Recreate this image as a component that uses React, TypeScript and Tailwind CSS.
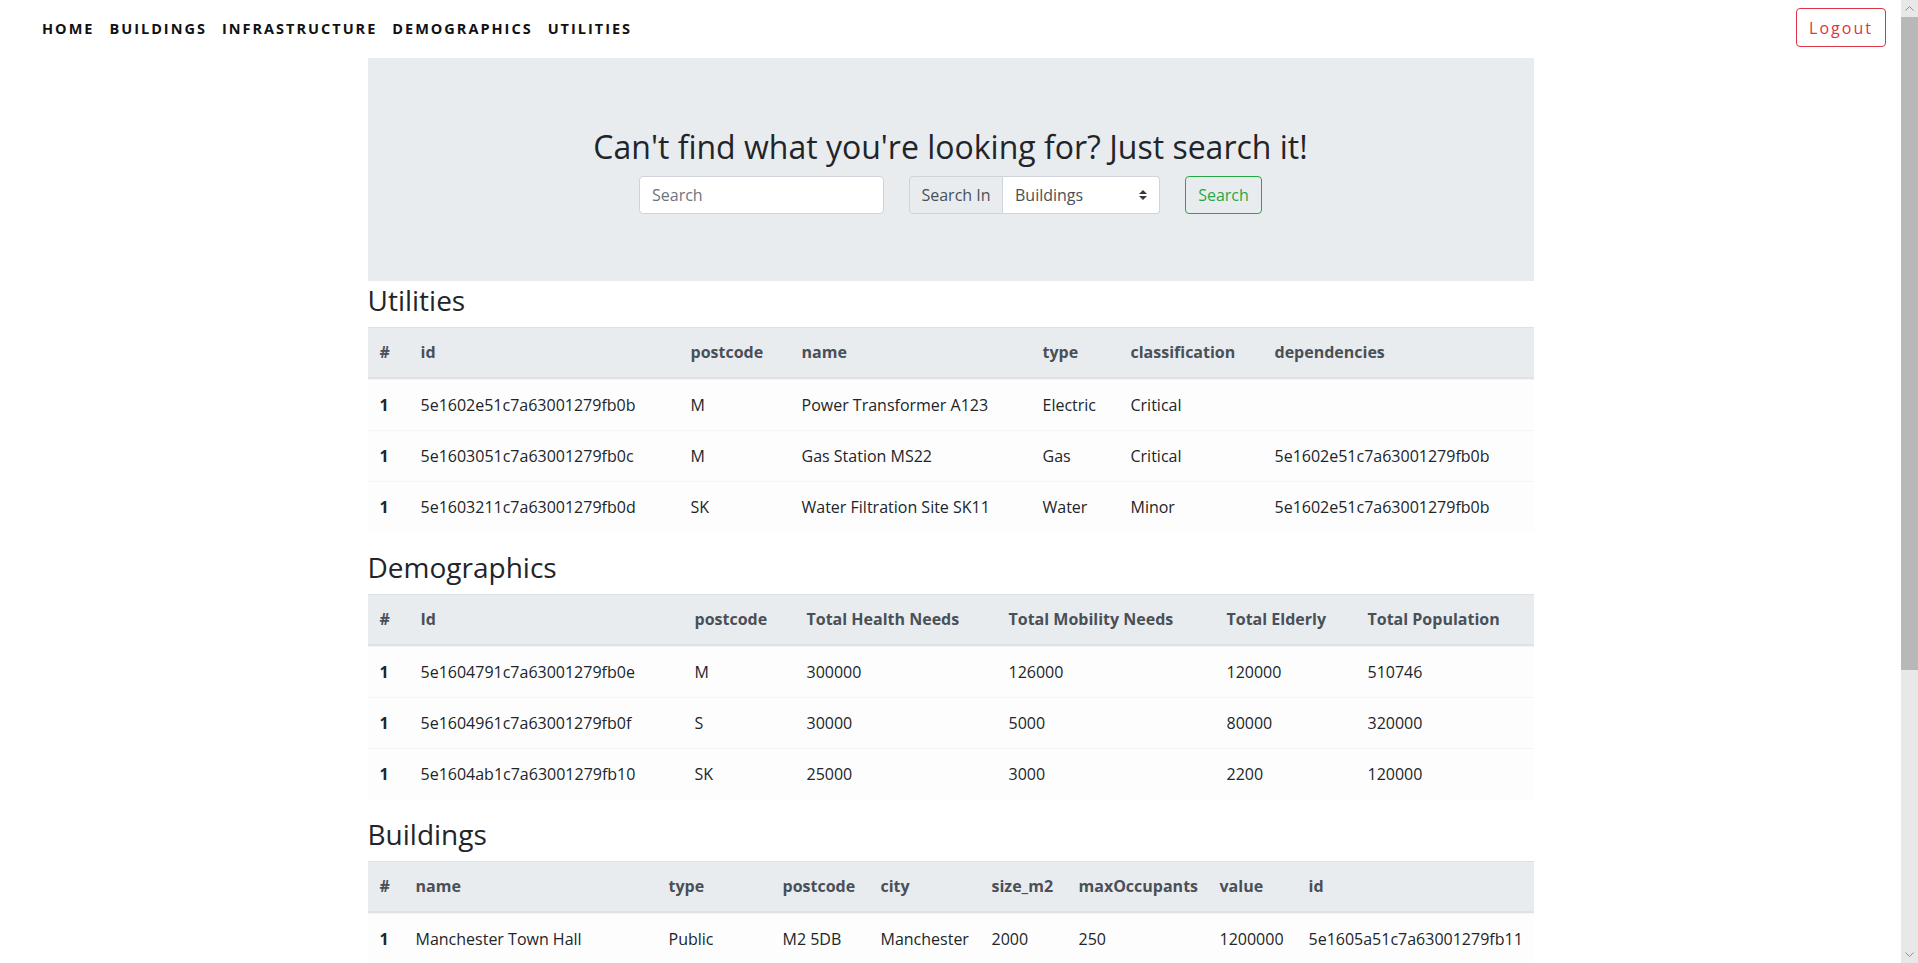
import { ReactNode } from "react"

const navLinks = ["HOME", "BUILDINGS", "INFRASTRUCTURE", "DEMOGRAPHICS", "UTILITIES"]

type Col = { label: string; w: string }

const utilCols: Col[] = [
  { label: "#", w: "w-[41px]" },
  { label: "id", w: "w-[270px]" },
  { label: "postcode", w: "w-[111px]" },
  { label: "name", w: "w-[241px]" },
  { label: "type", w: "w-[88px]" },
  { label: "classification", w: "w-[144px]" },
  { label: "dependencies", w: "w-[271px]" },
]
const utilRows = [
  ["1", "5e1602e51c7a63001279fb0b", "M", "Power Transformer A123", "Electric", "Critical", ""],
  ["1", "5e1603051c7a63001279fb0c", "M", "Gas Station MS22", "Gas", "Critical", "5e1602e51c7a63001279fb0b"],
  ["1", "5e1603211c7a63001279fb0d", "SK", "Water Filtration Site SK11", "Water", "Minor", "5e1602e51c7a63001279fb0b"],
]

const demoCols: Col[] = [
  { label: "#", w: "w-[41px]" },
  { label: "Id", w: "w-[274px]" },
  { label: "postcode", w: "w-[112px]" },
  { label: "Total Health Needs", w: "w-[202px]" },
  { label: "Total Mobility Needs", w: "w-[218px]" },
  { label: "Total Elderly", w: "w-[141px]" },
  { label: "Total Population", w: "w-[178px]" },
]
const demoRows = [
  ["1", "5e1604791c7a63001279fb0e", "M", "300000", "126000", "120000", "510746"],
  ["1", "5e1604961c7a63001279fb0f", "S", "30000", "5000", "80000", "320000"],
  ["1", "5e1604ab1c7a63001279fb10", "SK", "25000", "3000", "2200", "120000"],
]

const buildCols: Col[] = [
  { label: "#", w: "w-[36px]" },
  { label: "name", w: "w-[253px]" },
  { label: "type", w: "w-[114px]" },
  { label: "postcode", w: "w-[98px]" },
  { label: "city", w: "w-[111px]" },
  { label: "size_m2", w: "w-[87px]" },
  { label: "maxOccupants", w: "w-[141px]" },
  { label: "value", w: "w-[89px]" },
  { label: "id", w: "w-[237px]" },
]
const buildRows = [
  ["1", "Manchester Town Hall", "Public", "M2 5DB", "Manchester", "2000", "250", "1200000", "5e1605a51c7a63001279fb11"],
]

const DataTable = ({ cols, rows }: { cols: Col[]; rows: string[][] }) => {
  return (
    <table className="w-full table-fixed border-separate border-spacing-0 mb-4 text-[16px]">
      <colgroup>
        {cols.map((c, i) => (
          <col key={i} className={c.w} />
        ))}
      </colgroup>
      <thead>
        <tr>
          {cols.map((c, i) => (
            <th
              key={i}
              className="bg-[#e9ecef] text-[#495057] font-bold text-left px-3 py-3 leading-[25px] border-t border-b-2 border-[#dee2e6] whitespace-nowrap"
            >
              {c.label}
            </th>
          ))}
        </tr>
      </thead>
      <tbody>
        {rows.map((r, ri) => (
          <tr key={ri}>
            {r.map((cell, ci) => (
              <td
                key={ci}
                className={
                  "bg-[#fdfdfe] text-[#212529] text-left px-3 py-3 leading-[26px] border-t border-[#f3f4f5] whitespace-nowrap " +
                  (ci === 0 ? "font-bold" : "")
                }
              >
                {cell}
              </td>
            ))}
          </tr>
        ))}
      </tbody>
    </table>
  )
}

const Section = ({ title, children }: { title: string; children: ReactNode }) => (
  <section>
    <h3 className="text-[28px] leading-[34px] pt-[2px] mb-[10px] text-[#212529]">{title}</h3>
    {children}
  </section>
)

const Scrollbar = () => (
  <div className="w-[17px] h-full flex flex-col bg-[#e8e8e8] shrink-0">
    <div className="h-[17px] flex items-center justify-center">
      <svg width="9" height="5" viewBox="0 0 9 5">
        <path d="M0.5 4.5 L4.5 0.5 L8.5 4.5" fill="none" stroke="#8f8f8f" strokeWidth="1" />
      </svg>
    </div>
    <div className="h-[653px] bg-[#b8b8b8]" />
    <div className="flex-1" />
    <div className="h-[17px] flex items-center justify-center">
      <svg width="9" height="5" viewBox="0 0 9 5">
        <path d="M0.5 0.5 L4.5 4.5 L8.5 0.5" fill="none" stroke="#8f8f8f" strokeWidth="1" />
      </svg>
    </div>
  </div>
)

export default function App() {
  return (
    <div className="flex h-[963px] w-full overflow-hidden bg-white font-['Open_Sans',sans-serif] text-[#212529]">
      <div className="flex-1 min-w-0 h-full overflow-hidden">
        <nav className="h-[58px] flex items-start justify-between pl-[42px] pr-[15px] pt-2">
          <ul className="flex gap-[15px] h-[41px] items-center">
            {navLinks.map((l) => (
              <li key={l} className="text-[14.5px] font-bold tracking-[2px] text-[#111]">
                {l}
              </li>
            ))}
          </ul>
          <button className="h-[39px] w-[90px] border border-[#dc3545] text-[#dc3545] rounded-[4px] text-[16px] tracking-[2px] bg-white">
            Logout
          </button>
        </nav>

        <main className="w-[1166px] mx-auto">
          <div className="h-[223px] bg-[#e9ecef] flex flex-col items-center pt-[70px]">
            <h2 className="text-[32px] leading-[38px] text-[#212529] mb-[10px]">
              Can't find what you're looking for? Just search it!
            </h2>
            <div className="flex items-center gap-[25px] h-[38px]">
              <input
                placeholder="Search"
                className="w-[245px] h-[38px] px-3 border border-[#ced4da] rounded-[4px] bg-white text-[16px] placeholder:text-[#6c757d] outline-none"
              />
              <div className="flex h-[38px] w-[251px]">
                <span className="w-[94px] shrink-0 flex items-center justify-center whitespace-nowrap bg-[#e9ecef] border border-[#ced4da] rounded-l-[4px] text-[#495057] text-[16px]">
                  Search In
                </span>
                <div className="flex-1 flex items-center justify-between pl-3 pr-3 bg-white border border-l-0 border-[#ced4da] rounded-r-[4px] text-[#495057] text-[16px]">
                  <span>Buildings</span>
                  <svg width="8" height="10" viewBox="0 0 4 5">
                    <path fill="#343a40" d="M2 0L0 2h4zm0 5L0 3h4z" />
                  </svg>
                </div>
              </div>
              <button className="w-[77px] h-[38px] border border-[#28a745] text-[#28a745] rounded-[4px] text-[16px] bg-transparent">
                Search
              </button>
            </div>
          </div>

          <Section title="Utilities">
            <DataTable cols={utilCols} rows={utilRows} />
          </Section>
          <Section title="Demographics">
            <DataTable cols={demoCols} rows={demoRows} />
          </Section>
          <Section title="Buildings">
            <DataTable cols={buildCols} rows={buildRows} />
          </Section>
        </main>
      </div>
      <Scrollbar />
    </div>
  )
}
